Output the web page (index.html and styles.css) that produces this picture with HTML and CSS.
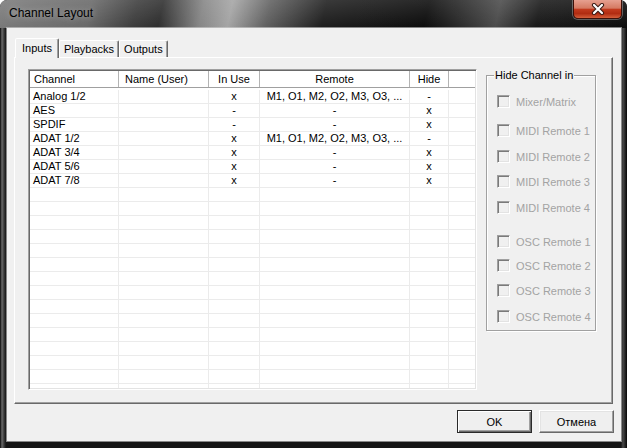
FILE: index.html
```html
<!DOCTYPE html>
<html>
<head>
<meta charset="utf-8">
<link rel="stylesheet" href="styles.css">
</head>
<body>
<div class="window">
  <div class="titlebar">
    <span class="title">Channel Layout</span>
    <div class="close">
      <svg width="14" height="12" viewBox="0 0 14 12">
        <path d="M3 2 L11 10 M11 2 L3 10" stroke="#3a1a14" stroke-width="4.2" stroke-linecap="round"/>
        <path d="M3 2 L11 10 M11 2 L3 10" stroke="#ffffff" stroke-width="2.2" stroke-linecap="round"/>
      </svg>
    </div>
  </div>
  <div class="client">
    <div class="tabs">
      <div class="tab active">Inputs</div>
      <div class="tab">Playbacks</div>
      <div class="tab">Outputs</div>
    </div>
    <div class="pane">
      <div class="list">
        <div class="lhead">
          <div class="hc left">Channel</div>
          <div class="hc left name">Name (User)</div>
          <div class="hc">In Use</div>
          <div class="hc">Remote</div>
          <div class="hc">Hide</div>
          <div class="hc filler"></div>
        </div>
        <div class="lbody">
          <div class="row"><div class="c c1">Analog 1/2</div><div class="c"></div><div class="c m">x</div><div class="c m">M1, O1, M2, O2, M3, O3, ...</div><div class="c m">-</div><div class="c f"></div></div>
          <div class="row"><div class="c c1">AES</div><div class="c"></div><div class="c m">-</div><div class="c m">-</div><div class="c m">x</div><div class="c f"></div></div>
          <div class="row"><div class="c c1">SPDIF</div><div class="c"></div><div class="c m">-</div><div class="c m">-</div><div class="c m">x</div><div class="c f"></div></div>
          <div class="row"><div class="c c1">ADAT 1/2</div><div class="c"></div><div class="c m">x</div><div class="c m">M1, O1, M2, O2, M3, O3, ...</div><div class="c m">-</div><div class="c f"></div></div>
          <div class="row"><div class="c c1">ADAT 3/4</div><div class="c"></div><div class="c m">x</div><div class="c m">-</div><div class="c m">x</div><div class="c f"></div></div>
          <div class="row"><div class="c c1">ADAT 5/6</div><div class="c"></div><div class="c m">x</div><div class="c m">-</div><div class="c m">x</div><div class="c f"></div></div>
          <div class="row"><div class="c c1">ADAT 7/8</div><div class="c"></div><div class="c m">x</div><div class="c m">-</div><div class="c m">x</div><div class="c f"></div></div>
          <div class="row"><div class="c"></div><div class="c"></div><div class="c"></div><div class="c"></div><div class="c"></div><div class="c f"></div></div>
          <div class="row"><div class="c"></div><div class="c"></div><div class="c"></div><div class="c"></div><div class="c"></div><div class="c f"></div></div>
          <div class="row"><div class="c"></div><div class="c"></div><div class="c"></div><div class="c"></div><div class="c"></div><div class="c f"></div></div>
          <div class="row"><div class="c"></div><div class="c"></div><div class="c"></div><div class="c"></div><div class="c"></div><div class="c f"></div></div>
          <div class="row"><div class="c"></div><div class="c"></div><div class="c"></div><div class="c"></div><div class="c"></div><div class="c f"></div></div>
          <div class="row"><div class="c"></div><div class="c"></div><div class="c"></div><div class="c"></div><div class="c"></div><div class="c f"></div></div>
          <div class="row"><div class="c"></div><div class="c"></div><div class="c"></div><div class="c"></div><div class="c"></div><div class="c f"></div></div>
          <div class="row"><div class="c"></div><div class="c"></div><div class="c"></div><div class="c"></div><div class="c"></div><div class="c f"></div></div>
          <div class="row"><div class="c"></div><div class="c"></div><div class="c"></div><div class="c"></div><div class="c"></div><div class="c f"></div></div>
          <div class="row"><div class="c"></div><div class="c"></div><div class="c"></div><div class="c"></div><div class="c"></div><div class="c f"></div></div>
          <div class="row"><div class="c"></div><div class="c"></div><div class="c"></div><div class="c"></div><div class="c"></div><div class="c f"></div></div>
          <div class="row"><div class="c"></div><div class="c"></div><div class="c"></div><div class="c"></div><div class="c"></div><div class="c f"></div></div>
          <div class="row"><div class="c"></div><div class="c"></div><div class="c"></div><div class="c"></div><div class="c"></div><div class="c f"></div></div>
          <div class="row"><div class="c"></div><div class="c"></div><div class="c"></div><div class="c"></div><div class="c"></div><div class="c f"></div></div>
          <div class="row"><div class="c"></div><div class="c"></div><div class="c"></div><div class="c"></div><div class="c"></div><div class="c f"></div></div>
        </div>
      </div>
      <div class="group">
        <span class="gtitle">Hide Channel in</span>
        <div class="chk"><span class="box"></span><span>Mixer/Matrix</span></div>
        <div class="chk"><span class="box"></span><span>MIDI Remote 1</span></div>
        <div class="chk"><span class="box"></span><span>MIDI Remote 2</span></div>
        <div class="chk"><span class="box"></span><span>MIDI Remote 3</span></div>
        <div class="chk"><span class="box"></span><span>MIDI Remote 4</span></div>
        <div class="chk"><span class="box"></span><span>OSC Remote 1</span></div>
        <div class="chk"><span class="box"></span><span>OSC Remote 2</span></div>
        <div class="chk"><span class="box"></span><span>OSC Remote 3</span></div>
        <div class="chk"><span class="box"></span><span>OSC Remote 4</span></div>
      </div>
    </div>
    <div class="buttons">
      <button class="btn def">OK</button>
      <button class="btn">Отмена</button>
    </div>
  </div>
</div>
</body>
</html>
```
FILE: styles.css
```css
* { box-sizing: border-box; }
html, body { margin: 0; padding: 0; }
body {
  width: 627px;
  height: 448px;
  overflow: hidden;
  background: #ffffff;
  font-family: "Liberation Sans", Arial, sans-serif;
  font-size: 11px;
  color: #000;
}

.window {
  width: 627px;
  height: 448px;
  display: flex;
  flex-direction: column;
  padding: 0 6px 7px 7px;
  border-radius: 7px 7px 0 0;
  background:
    linear-gradient(to right, #050505 0px, #6a6a6a 2px, #3a3a3a 4px, #141414 6px, #141414 621px, #4a4a4a 623px, #060606 627px);
}

.titlebar {
  height: 28px;
  margin: 0 -6px 0 -7px;
  padding: 0 5px 0 9px;
  display: flex;
  align-items: flex-start;
  border-radius: 7px 7px 0 0;
  background:
    linear-gradient(to bottom, rgba(255,255,255,0.12), rgba(255,255,255,0) 28px),
    linear-gradient(102deg, #7a7a7a 0px, #686868 90px, #3c3c3c 135px, #2e2e2e 160px, #858585 200px, #a4a4a4 228px, #606060 265px, #1e1e1e 320px, #0c0c0c 420px, #262626 450px, #4a4a4a 490px, #181818 530px, #0a0a0a 627px);
}

.title {
  padding-top: 6px;
  font-size: 12px;
  line-height: 15px;
  color: #000;
  text-shadow: 0 0 6px rgba(255,255,255,0.45);
}

.close {
  margin-left: auto;
  width: 49px;
  height: 19px;
  display: flex;
  align-items: center;
  justify-content: center;
  border: 1px solid #3d1009;
  border-top: none;
  border-radius: 0 0 5px 5px;
  background: linear-gradient(#e6a090 0%, #d57a63 45%, #c23a1e 52%, #b12c12 75%, #d45e3a 100%);
  box-shadow: 0 0 0 1px rgba(255,255,255,0.3);
}

.client {
  height: 413px;
  display: flex;
  flex-direction: column;
  padding: 0 8px 0 7px;
  background: #f0f0f0;
  box-shadow: 0 0 0 1px rgba(210,210,210,0.6);
}

.tabs {
  display: flex;
  align-items: flex-end;
  height: 19px;
  margin-top: 10px;
  padding-left: 1px;
}

.tab {
  height: 17px;
  padding: 0 4px;
  line-height: 16px;
  border: 1px solid;
  border-bottom: none;
  border-color: #ffffff #696969 transparent #ffffff;
  border-radius: 2px 2px 0 0;
  box-shadow: inset -1px 0 0 #a0a0a0;
  background: #f0f0f0;
}

.tab.active {
  height: 20px;
  margin-bottom: -1px;
  padding: 0 6px;
  line-height: 18px;
  position: relative;
  z-index: 1;
}

.pane {
  height: 347px;
  display: flex;
  align-items: flex-start;
  padding: 11px 0 0 13px;
  border: 1px solid;
  border-color: #ffffff #696969 #696969 #ffffff;
  box-shadow: inset -1px -1px 0 #a0a0a0;
}

.list {
  width: 449px;
  height: 321px;
  display: flex;
  flex-direction: column;
  padding: 1px;
  border: 1px solid;
  border-color: #a0a0a0 #ffffff #ffffff #a0a0a0;
  box-shadow: inset 1px 1px 0 #696969, inset -1px -1px 0 #e3e3e3;
  background: #ffffff;
}

.lhead, .row {
  display: grid;
  grid-template-columns: 89px 90px 51px 150px 39px 26px;
}

.lhead {
  height: 17px;
  border-bottom: 1px solid #a0a0a0;
}

.hc {
  line-height: 16px;
  text-align: center;
  border-right: 1px solid #b4b4b4;
  white-space: nowrap;
}
.hc.left { text-align: left; padding-left: 4px; }
.hc.name { padding-left: 6px; }
.hc.filler { border-right: none; }

.lbody {
  flex: 1;
  overflow: hidden;
  padding-top: 2px;
}

.row { height: 14px; }

.c {
  height: 14px;
  line-height: 13px;
  border-right: 1px solid #ebebeb;
  border-bottom: 1px solid #ebebeb;
  white-space: nowrap;
  overflow: hidden;
}
.c.c1 { padding-left: 3px; }
.c.m { text-align: center; }
.c.f { border-right: none; }

.group {
  position: relative;
  width: 110px;
  height: 256px;
  margin: 6px 0 0 9px;
  padding: 19px 0 0 10px;
  border: 1px solid #a0a0a0;
  box-shadow: inset 1px 1px 0 #ffffff, 1px 1px 0 #ffffff;
}

.gtitle {
  position: absolute;
  left: 7px;
  top: -8px;
  padding: 0 1px;
  line-height: 14px;
  background: #f0f0f0;
  white-space: nowrap;
}

.chk {
  display: flex;
  align-items: center;
  gap: 6px;
  height: 13px;
  color: #a3a3a3;
  white-space: nowrap;
}
.chk:nth-of-type(2) { margin-top: 16px; }
.chk:nth-of-type(3) { margin-top: 13px; }
.chk:nth-of-type(4) { margin-top: 12px; }
.chk:nth-of-type(5) { margin-top: 13px; }
.chk:nth-of-type(6) { margin-top: 21px; }
.chk:nth-of-type(7) { margin-top: 11px; }
.chk:nth-of-type(8) { margin-top: 12px; }
.chk:nth-of-type(9) { margin-top: 13px; }

.box {
  flex: none;
  width: 13px;
  height: 13px;
  border: 1px solid;
  border-color: #a0a0a0 #ffffff #ffffff #a0a0a0;
  box-shadow: inset 1px 1px 0 #7a7a7a, inset -1px -1px 0 #e3e3e3;
  background: #f0f0f0;
}

.buttons {
  display: flex;
  justify-content: flex-end;
  gap: 7px;
  margin-top: 6px;
  margin-right: -1px;
}

.btn {
  width: 75px;
  height: 23px;
  margin: 0;
  padding: 0;
  font: inherit;
  color: #000;
  background: #efefef;
  border: 1px solid;
  border-color: #ffffff #696969 #696969 #ffffff;
  box-shadow: inset -1px -1px 0 #a0a0a0, inset 1px 1px 0 #e3e3e3;
  display: flex;
  align-items: center;
  justify-content: center;
}

.btn.def {
  border: 1px solid #2a2a2a;
  box-shadow: inset 1px 1px 0 #ffffff, inset -1px -1px 0 #696969, inset -2px -2px 0 #a0a0a0;
}
```
